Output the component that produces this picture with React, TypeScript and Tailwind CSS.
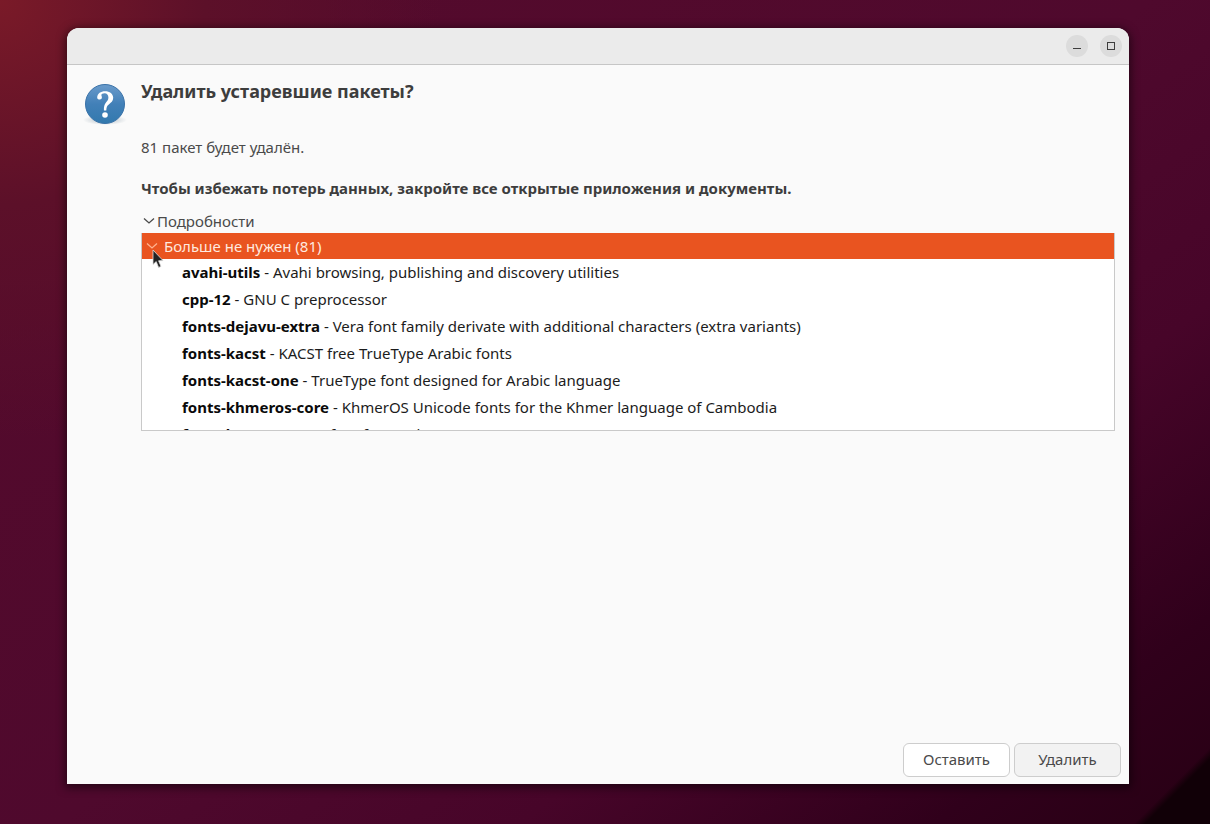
import { useState } from 'react';

const packages = [
  { name: 'avahi-utils', desc: 'Avahi browsing, publishing and discovery utilities' },
  { name: 'cpp-12', desc: 'GNU C preprocessor' },
  { name: 'fonts-dejavu-extra', desc: 'Vera font family derivate with additional characters (extra variants)' },
  { name: 'fonts-kacst', desc: 'KACST free TrueType Arabic fonts' },
  { name: 'fonts-kacst-one', desc: 'TrueType font designed for Arabic language' },
  { name: 'fonts-khmeros-core', desc: 'KhmerOS Unicode fonts for the Khmer language of Cambodia' },
  { name: 'fonts-lao', desc: 'TrueType font for Lao language' },
];

function Chevron({ className }: { className: string }) {
  return (
    <svg viewBox="0 0 12 12" className={className} fill="none" stroke="currentColor" strokeWidth="1.3" aria-hidden="true">
      <path d="M1 3.5 L6 8 L11 3.5" />
    </svg>
  );
}

function QuestionIcon() {
  return (
    <svg viewBox="0 0 44 44" className="size-11 shrink-0" aria-hidden="true">
      <defs>
        <linearGradient id="ball" x1="0" y1="0" x2="0" y2="1">
          <stop offset="0" stopColor="#6a9bcb" />
          <stop offset="0.5" stopColor="#4280b8" />
          <stop offset="1" stopColor="#3279ae" />
        </linearGradient>
        <radialGradient id="ground">
          <stop offset="0" stopColor="#8fa0ad" stopOpacity="0.7" />
          <stop offset="1" stopColor="#8fa0ad" stopOpacity="0" />
        </radialGradient>
      </defs>
      <ellipse cx="22" cy="38" rx="22" ry="5" fill="url(#ground)" />
      <circle cx="22" cy="22" r="19.5" fill="url(#ball)" stroke="#3a72a8" />
      <path
        d="M14.2 15.4 C14.4 11.4 17.8 9.2 22 9.2 C26.8 9.2 30.2 11.8 30.2 15.8 C30.2 19 28 20.8 25.8 22.4 C24 23.8 23.4 25.2 23.3 28.6 L20.9 28.6 C20.8 24.6 21.4 22.6 23 20.6 C24.4 19 25.4 17.8 25.4 15.6 C25.4 12.8 24 11.2 21.6 11.2 C19.6 11.2 18.4 12 18.4 13 C18.4 14 18.9 14.4 18.9 15.6 C18.9 16.8 18 17.6 16.8 17.6 C15.2 17.6 14.2 16.8 14.2 15.4 Z"
        fill="#fff"
      />
      <circle cx="22" cy="33" r="2.8" fill="#fff" />
    </svg>
  );
}

function Pointer() {
  return (
    <svg viewBox="0 0 12 20" className="absolute left-2.5 top-4 z-10 h-5 w-3" aria-hidden="true">
      <path d="M1 1 L1 15.5 L4.2 12.6 L6.6 18.4 L9 17.4 L6.6 11.8 L11 11.6 Z" fill="#222" stroke="#ddd" strokeWidth="0.8" />
    </svg>
  );
}

export default function App() {
  const [open, setOpen] = useState(true);
  const [expanded, setExpanded] = useState(true);

  return (
    <div className="flex min-h-screen flex-col bg-[linear-gradient(315deg,#110007_46px,transparent_54px),radial-gradient(circle_at_0%_0%,#7a1a28_0%,#5c1029_14%,transparent_30%),linear-gradient(143deg,#560b2c_0%,#4f092d_50%,#470529_70%,#30001b_88%,#280014_100%)] pt-7 pr-[81px] pb-10 pl-[67px] font-['Noto_Sans',sans-serif] text-[15px] text-[#4a4a4a]">
      <main className="flex grow flex-col rounded-t-xl bg-[#fafafa] shadow-[0_2px_8px_2px_rgba(0,0,0,0.5)]">
        <header className="flex h-[37px] items-center justify-end gap-3 rounded-t-xl border-b border-[#c6c6c6] bg-[#ebebeb] pr-[7px]">
          <button aria-label="Свернуть" className="flex size-[22px] items-center justify-center rounded-full bg-[#dcdcdc]">
            <svg viewBox="0 0 10 10" className="size-2.5" fill="none" stroke="#3d3d3d">
              <path d="M1 7.5 H9" />
            </svg>
          </button>
          <button aria-label="Развернуть" className="flex size-[22px] items-center justify-center rounded-full bg-[#dcdcdc]">
            <svg viewBox="0 0 10 10" className="size-2.5" fill="none" stroke="#3d3d3d">
              <rect x="1.5" y="1.5" width="7" height="7" />
            </svg>
          </button>
        </header>

        <div className="flex grow gap-3.5 pt-3.5 pr-3.5 pl-4">
          <div className="pt-[3px]">
            <QuestionIcon />
          </div>
          <section className="min-w-0 grow">
            <h1 className="text-lg leading-6 font-bold text-[#3d3d3d]">Удалить устаревшие пакеты?</h1>
            <p className="mt-8 leading-6">81 пакет будет удалён.</p>
            <p className="mt-[17px] leading-6 font-bold text-[#3d3d3d]">
              Чтобы избежать потерь данных, закройте все открытые приложения и документы.
            </p>
            <button onClick={() => setOpen(!open)} aria-expanded={open} className="mt-[9px] flex items-center gap-0.5 pl-0.5 leading-6">
              <Chevron className="size-3" />
              Подробности
            </button>

            {open && (
              <div className="h-[198px] overflow-hidden border border-t-0 border-[#c9c9c9] bg-white text-[#1c1c1c]">
                <div className="relative">
                  <button
                    onClick={() => setExpanded(!expanded)}
                    aria-expanded={expanded}
                    className="flex h-[26px] w-full items-center gap-1.5 bg-[#e95420] pl-1 text-left text-[#ffe9df]"
                  >
                    <Chevron className="size-3 text-[#ffb28f]" />
                    Больше не нужен (81)
                  </button>
                  <Pointer />
                </div>
                {expanded && (
                  <ul>
                    {packages.map((pkg) => (
                      <li key={pkg.name} className="h-[27px] pl-10 leading-[26px] whitespace-nowrap">
                        <b className="text-[#0a0a0a]">{pkg.name}</b> - {pkg.desc}
                      </li>
                    ))}
                  </ul>
                )}
              </div>
            )}
          </section>
        </div>

        <footer className="flex justify-end gap-1 px-2 pt-2 pb-[7px]">
          <button className="h-[34px] w-[107px] rounded-md border border-[#cdcdcd] bg-white pb-0.5">Оставить</button>
          <button className="h-[34px] w-[107px] rounded-md border border-[#cdcdcd] bg-[#f2f2f2] pb-0.5">Удалить</button>
        </footer>
      </main>
    </div>
  );
}
